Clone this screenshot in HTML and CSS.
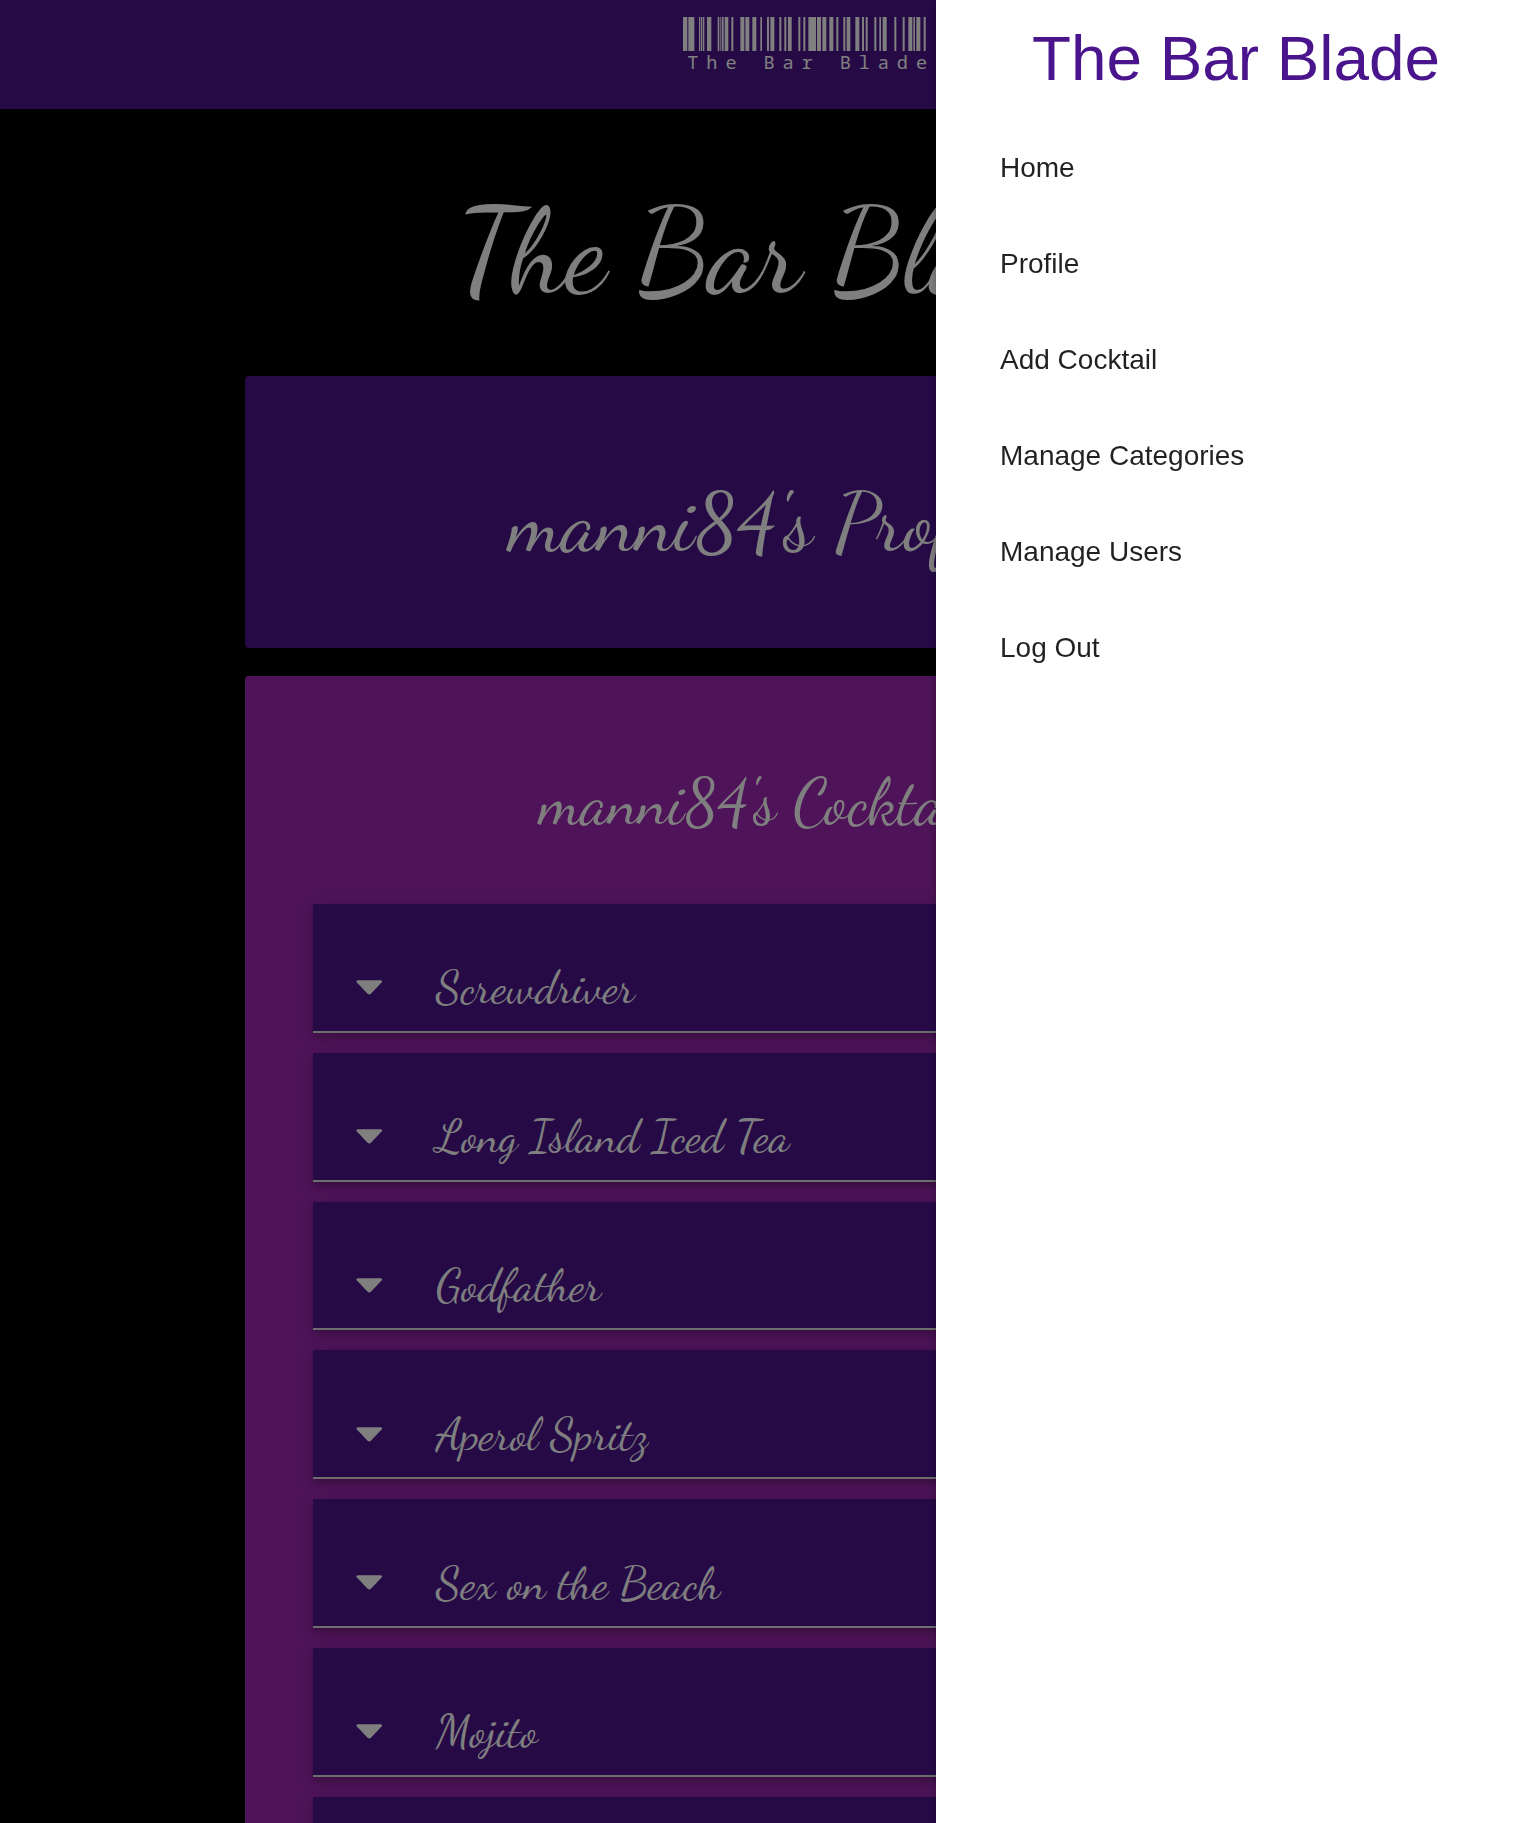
FILE: index.html
```html
<!DOCTYPE html>
<html lang="en">
<head>
<meta charset="utf-8">
<title>The Bar Blade</title>
<link rel="stylesheet" href="styles.css">
</head>
<body>
<svg class="defs" width="0" height="0" aria-hidden="true">
  <symbol id="caret" viewBox="0 0 27 15"><path d="M2 0H25Q27.6.4 26.3 2.2L15.2 13.9Q13.5 15.6 11.8 13.9L.7 2.2Q-.6.4 2 0Z"/></symbol>
</svg>
<header class="navbar">
  <div class="logo">
    <svg class="barcode" width="244" height="34" viewBox="38 0 732 34" preserveAspectRatio="none" aria-hidden="true">
      <path d="M38 0h13v34h-13zM54 0h18v34h-18zM86 0h4v34h-4zM92 0h4v34h-4zM98 0h4v34h-4zM110 0h13v34h-13zM142 0h5v34h-5zM150 0h3v34h-3zM155 0h5v34h-5zM163 0h11v34h-11zM183 0h6v34h-6zM210 0h12v34h-12zM225 0h12v34h-12zM246 0h12v34h-12zM270 0h5v34h-5zM290 0h6v34h-6zM300 0h12v34h-12zM327 0h6v34h-6zM342 0h6v34h-6zM353 0h11v34h-11zM384 0h6v34h-6zM399 0h6v34h-6zM414 0h23v34h-23zM440 0h12v34h-12zM456 0h12v34h-12zM477 0h12v34h-12zM498 0h6v34h-6zM519 0h6v34h-6zM529 0h11v34h-11zM555 0h12v34h-12zM575 0h6v34h-6zM586 0h6v34h-6zM612 0h6v34h-6zM627 0h5v34h-5zM637 0h12v34h-12zM672 0h6v34h-6zM697 0h6v34h-6zM714 0h12v34h-12zM729 0h5v34h-5zM738 0h12v34h-12zM760 0h6v34h-6z"/>
    </svg>
    <span class="logo-text">The Bar Blade</span>
  </div>
</header>
<main class="container">
  <h1 class="page-title">The Bar Blade</h1>
  <section class="card card-profile"><h2>manni84's Profile</h2></section>
  <section class="card card-cocktails">
    <h3>manni84's Cocktails</h3>
    <ul class="collapsible">
      <li><svg class="caret"><use href="#caret"/></svg><span>Screwdriver</span></li>
      <li><svg class="caret"><use href="#caret"/></svg><span>Long Island Iced Tea</span></li>
      <li><svg class="caret"><use href="#caret"/></svg><span>Godfather</span></li>
      <li><svg class="caret"><use href="#caret"/></svg><span>Aperol Spritz</span></li>
      <li><svg class="caret"><use href="#caret"/></svg><span>Sex on the Beach</span></li>
      <li><svg class="caret"><use href="#caret"/></svg><span>Mojito</span></li>
      <li class="cut"></li>
    </ul>
  </section>
</main>
<div class="overlay"></div>
<nav class="sidenav">
  <h4>The Bar Blade</h4>
  <a>Home</a>
  <a>Profile</a>
  <a>Add Cocktail</a>
  <a>Manage Categories</a>
  <a>Manage Users</a>
  <a>Log Out</a>
</nav>
</body>
</html>
```
FILE: styles.css
```css
* { box-sizing: border-box; }
html, body { height: 100%; }
body {
  margin: 0;
  overflow: hidden;
  background: #000;
  color: #fff;
  font-family: "Dancing Script", cursive;
}
h1, h2, h3, h4, ul { margin: 0; padding: 0; font-weight: 400; }
.defs { position: absolute; }

.navbar { height: 109px; padding: 17px 0 0 682.7px; background: #4a148c; }
.logo { display: flex; flex-direction: column; }
.barcode { fill: #fff; }
.logo-text {
  padding-left: 4.6px;
  font: 400 18.5px/20px "Noto Sans Mono", "DejaVu Sans Mono", monospace;
  letter-spacing: 7.95px;
  margin-top: 1px;
  white-space: nowrap;
}

.container { width: 1046px; margin: 0 auto; padding-top: 68px; }
.page-title {
  font-size: 118.2px;
  line-height: 150px;
  text-align: center;
  margin-bottom: 49px;
}
.card { border-radius: 4px; text-align: center; }
.card-profile { height: 272px; padding-top: 97px; background: #4a148c; margin-bottom: 28px; }
.card-profile h2 { font-size: 82.2px; line-height: 100px; }
.card-cocktails { height: 1147px; padding: 87px 68px 0; background: #9c27b0; border-radius: 4px 4px 0 0; }
.card-cocktails h3 { font-size: 64.1px; line-height: 80px; }

.collapsible { list-style: none; margin-top: 61px; display: grid; gap: 20px; }
.collapsible li {
  display: flex;
  align-items: center;
  gap: 53.5px;
  height: 128.8px;
  padding: 42px 43px 0;
  border-bottom: 2px solid #ddd;
  background: #4a148c;
  font-size: 46.1px;
  line-height: 54px;
  box-shadow: 0 4px 6px rgba(0,0,0,.2), 0 4px 20px rgba(0,0,0,.12);
}
.collapsible .cut { height: 26px; border: 0; padding: 0; }
.caret { width: 26.5px; height: 15px; fill: #fff; margin-bottom: 1.5px; flex: none; }

.overlay { position: fixed; inset: 0; background: rgba(0,0,0,.5); }
.sidenav {
  position: fixed;
  top: 0;
  right: 0;
  width: 600px;
  height: 100%;
  background: #fff;
  color: rgba(0,0,0,.87);
  font-family: "Liberation Sans", Arial, sans-serif;
  box-shadow: 0 4px 4px rgba(0,0,0,.14), 0 2px 10px rgba(0,0,0,.2);
}
.sidenav h4 {
  font-size: 63.84px;
  line-height: 70px;
  padding: 23px 0 27px;
  text-align: center;
  color: #4a148c;
}
.sidenav a { display: block; padding-left: 64px; font-size: 28px; line-height: 96px; }
```
